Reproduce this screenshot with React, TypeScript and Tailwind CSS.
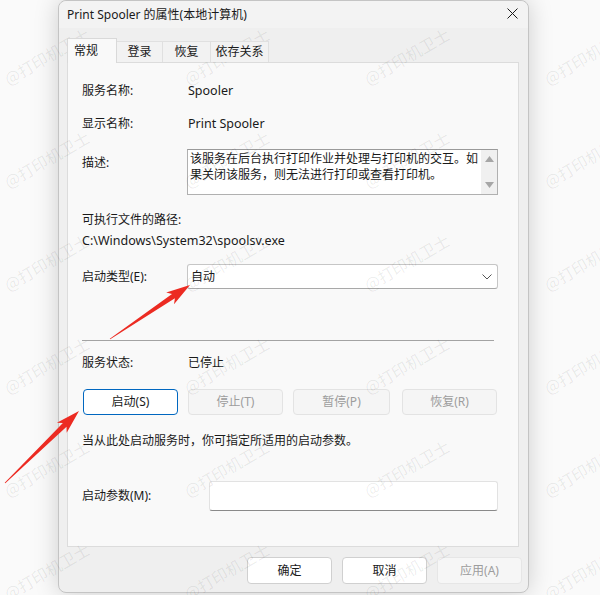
import React from "react";

// 红色箭头：从 tail 指向 tip，箭身渐宽
function arrowPoints(tx: number, ty: number, px: number, py: number) {
  const dx = px - tx;
  const dy = py - ty;
  const len = Math.hypot(dx, dy);
  const ux = dx / len;
  const uy = dy / len;
  const nx = -uy;
  const ny = ux;
  const h = 20;
  const bx = px - ux * h;
  const by = py - uy * h;
  const wx = px - ux * (h + 4);
  const wy = py - uy * (h + 4);
  const pts: [number, number][] = [
    [tx + nx * 0.4, ty + ny * 0.4],
    [bx + nx * 2.6, by + ny * 2.6],
    [wx + nx * 7, wy + ny * 7],
    [px, py],
    [wx - nx * 7, wy - ny * 7],
    [bx - nx * 2.6, by - ny * 2.6],
    [tx - nx * 0.4, ty - ny * 0.4],
  ];
  return pts.map((p) => p.map((v) => v.toFixed(1)).join(",")).join(" ");
}

const rows = [0, 1, 2, 3, 4, 5];
const cols = [0, 1, 2, 3];

export default function App() {
  return (
    <div className="relative h-[595px] w-[600px] overflow-hidden bg-[#fafafa] font-['Noto_Sans','Noto_Sans_CJK_SC',sans-serif] text-[12px] leading-[16px] text-[#1a1a1a]">
      {/* 对话框 */}
      <div className="ml-[58px] flex h-[593px] w-[471px] flex-col rounded-lg border border-[#c4c4c4] bg-[#efefef] shadow-[0_0_24px_rgba(0,0,0,0.18)]">
        {/* 标题栏 */}
        <div className="flex h-[27px] items-center justify-between rounded-t-lg bg-[#f3f3f3] pl-[8px] pr-[10px]">
          <span>Print Spooler 的属性(本地计算机)</span>
          <svg width="11" height="11" viewBox="0 0 11 11" className="mt-[-2px]">
            <path d="M0.5 0.5 L10.5 10.5 M10.5 0.5 L0.5 10.5" stroke="#1a1a1a" strokeWidth="1" />
          </svg>
        </div>

        {/* 选项卡 */}
        <div className="relative z-10 flex h-[34px] items-end pl-[8px]">
          <div className="-mb-px flex h-[25px] w-[50px] items-center border border-b-0 border-[#d9d9d9] bg-[#f9f9f9] pl-[6px] pb-[1px]">
            常规
          </div>
          <div className="flex h-[21px] w-[46px] items-center justify-center border border-b-0 border-l-0 border-[#e0e0e0] bg-[#f2f2f2]">
            登录
          </div>
          <div className="flex h-[21px] w-[48px] items-center justify-center border border-b-0 border-l-0 border-[#e0e0e0] bg-[#f2f2f2]">
            恢复
          </div>
          <div className="flex h-[21px] w-[58px] items-center justify-center border border-b-0 border-l-0 border-[#e0e0e0] bg-[#f2f2f2]">
            依存关系
          </div>
        </div>

        {/* 内容面板 */}
        <div className="ml-[8px] flex h-[485px] w-[452px] flex-col border border-[#dcdcdc] bg-[#f9f9f9] pl-[14px] pr-[20px] pt-[20px]">
          <div className="flex h-[16px]">
            <span className="w-[106px]">服务名称:</span>
            <span className="text-[12.5px]">Spooler</span>
          </div>
          <div className="mt-[17px] flex h-[16px]">
            <span className="w-[106px]">显示名称:</span>
            <span className="text-[12.5px]">Print Spooler</span>
          </div>
          <div className="mt-[17px] flex h-[46px] items-start">
            <span className="mt-[6px] w-[105px]">描述:</span>
            <div className="flex h-[46px] flex-1 border border-[#b0b0b0] border-t-[#9a9a9a] bg-white">
              <div className="flex-1 pl-[2px] pt-[1px]">
                <div>该服务在后台执行打印作业并处理与打印机的交互。如</div>
                <div>果关闭该服务，则无法进行打印或查看打印机。</div>
              </div>
              <div className="flex w-[16px] flex-col items-center justify-between bg-[#f0f0f0] py-[6px]">
                <svg width="9" height="6" viewBox="0 0 9 6">
                  <path d="M4.5 0 L9 6 L0 6 Z" fill="#a6a6a6" />
                </svg>
                <svg width="9" height="6" viewBox="0 0 9 6">
                  <path d="M0 0 L9 0 L4.5 6 Z" fill="#a6a6a6" />
                </svg>
              </div>
            </div>
          </div>
          <div className="mt-[17px] h-[16px]">可执行文件的路径:</div>
          <div className="mt-[5px] h-[16px] text-[12.5px]">C:\Windows\System32\spoolsv.exe</div>
          <div className="mt-[15px] flex h-[25px] items-center">
            <span className="w-[105px]">启动类型(E):</span>
            <div className="flex h-[25px] flex-1 items-center justify-between rounded-[3px] border border-[#c6c6c6] border-b-[#a8a8a8] bg-white pl-[3px] pr-[5px]">
              <span>自动</span>
              <svg width="10" height="6" viewBox="0 0 10 6">
                <path d="M0.5 0.5 L5 5 L9.5 0.5" stroke="#555" strokeWidth="1" fill="none" />
              </svg>
            </div>
          </div>
          <div className="mt-[51px] h-px w-[412px] bg-[#a3a3a3]" />
          <div className="mt-[14px] flex h-[16px]">
            <span className="w-[106px]">服务状态:</span>
            <span>已停止</span>
          </div>
          <div className="mt-[18px] flex h-[26px] pl-px">
            <div className="flex w-[95px] items-center justify-center rounded-[4px] border border-[#0067c0] bg-white">
              启动(S)
            </div>
            <div className="ml-[10px] flex w-[95px] items-center justify-center rounded-[4px] border border-[#e3e3e3] bg-[#f5f5f5] text-[#9d9d9d]">
              停止(T)
            </div>
            <div className="ml-[10px] flex w-[97px] items-center justify-center rounded-[4px] border border-[#e3e3e3] bg-[#f5f5f5] text-[#9d9d9d]">
              暂停(P)
            </div>
            <div className="ml-[12px] flex w-[95px] items-center justify-center rounded-[4px] border border-[#e3e3e3] bg-[#f5f5f5] text-[#9d9d9d]">
              恢复(R)
            </div>
          </div>
          <div className="mt-[18px] h-[16px]">当从此处启动服务时，你可指定所适用的启动参数。</div>
          <div className="mt-[32px] flex h-[30px] items-center">
            <span className="w-[127px]">启动参数(M):</span>
            <div className="h-[30px] flex-1 rounded-[3px] border border-[#e2e2e2] border-b-[#8a8a8a] bg-white" />
          </div>
        </div>

        {/* 底部按钮 */}
        <div className="mt-[10px] flex justify-end gap-[10px] pr-[6px]">
          <div className="flex h-[27px] w-[85px] items-center justify-center rounded-[4px] border border-[#d0d0d0] bg-white">
            确定
          </div>
          <div className="flex h-[27px] w-[85px] items-center justify-center rounded-[4px] border border-[#d0d0d0] bg-white">
            取消
          </div>
          <div className="flex h-[27px] w-[85px] items-center justify-center rounded-[4px] border border-[#e6e6e6] bg-[#f6f6f6] text-[#9d9d9d]">
            应用(A)
          </div>
        </div>
      </div>

      {/* 水印 */}
      <div className="pointer-events-none absolute left-[-43px] top-[4px] grid grid-cols-[repeat(4,180px)] grid-rows-[repeat(6,103px)]">
        {rows.map((r) =>
          cols.map((c) => (
            <div key={`${r}-${c}`} className="flex items-center justify-center">
              <span className="-rotate-[30deg] whitespace-nowrap font-['Noto_Sans_CJK_SC',sans-serif] text-[16px] text-black/[0.08]">
                @打印机卫士
              </span>
            </div>
          ))
        )}
      </div>

      {/* 红色箭头 */}
      <svg className="pointer-events-none absolute inset-0" width="600" height="595">
        <polygon points={arrowPoints(110, 339, 190, 285)} fill="#ec2b22" />
        <polygon points={arrowPoints(5, 483, 79, 411)} fill="#ec2b22" />
      </svg>
    </div>
  );
}
